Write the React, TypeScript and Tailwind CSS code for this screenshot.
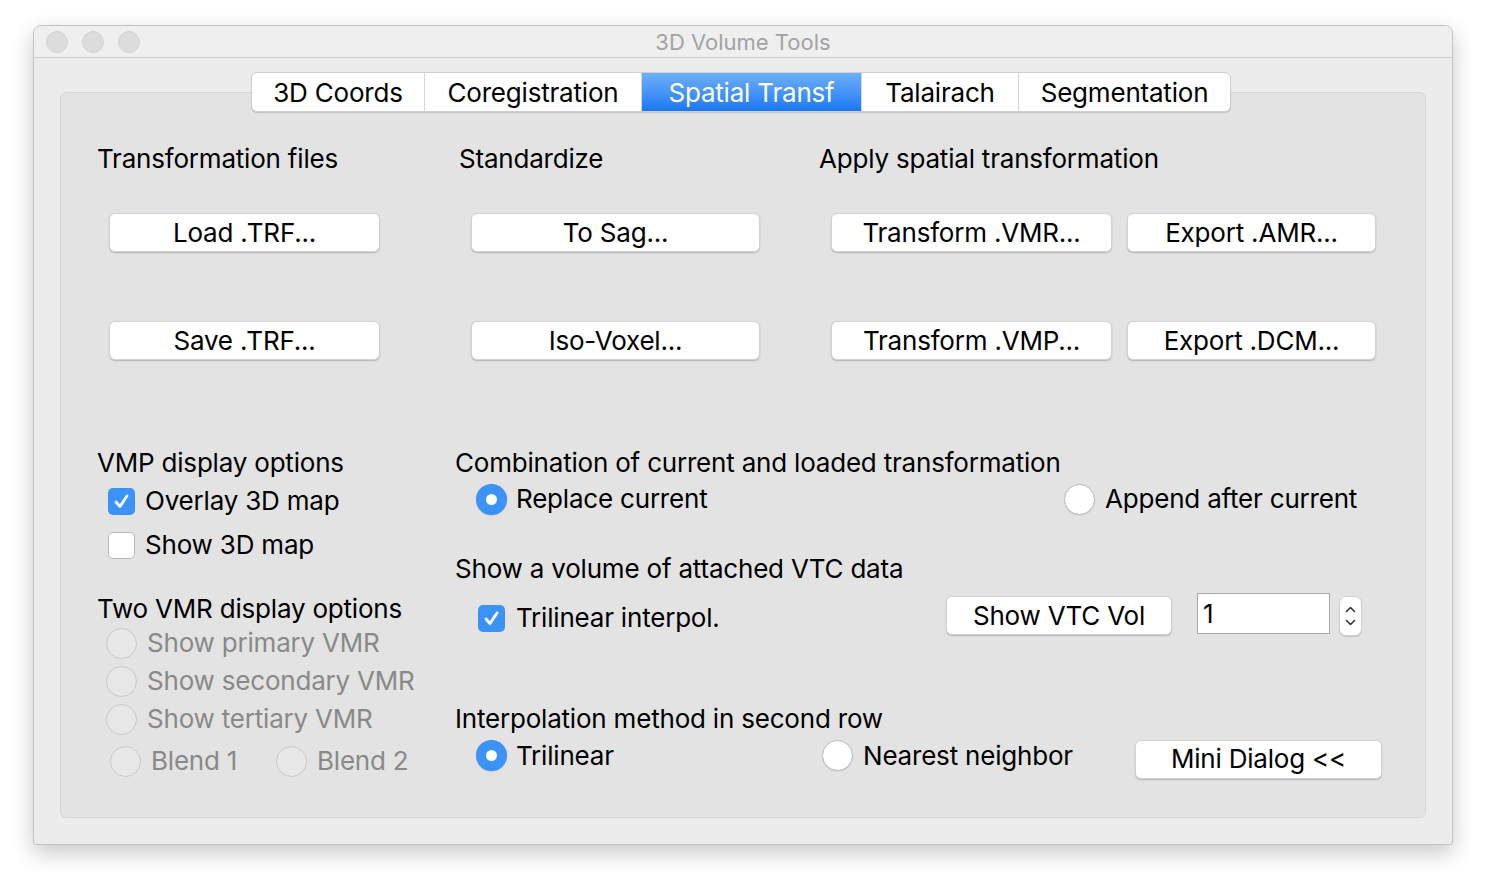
import React from "react";

const font = { fontFamily: "Inter, 'Liberation Sans', Arial, sans-serif" };

function Btn({ cls, children }: { cls: string; children: React.ReactNode }) {
  return (
    <div
      className={`h-[39px] rounded-[6px] bg-white border border-[#d2d2d2] shadow-[0_1px_1.5px_rgba(0,0,0,0.22)] flex items-center justify-center text-black ${cls}`}
    >
      {children}
    </div>
  );
}

function Radio({ state }: { state: "on" | "off" | "dis" }) {
  if (state === "on")
    return (
      <div className="w-[31px] h-[31px] shrink-0 rounded-full bg-[#3b93f7] flex items-center justify-center shadow-[0_0.5px_1px_rgba(0,0,0,0.2)]">
        <div className="w-[11px] h-[11px] rounded-full bg-white" />
      </div>
    );
  if (state === "off")
    return (
      <div className="w-[31px] h-[31px] shrink-0 rounded-full bg-white border border-[#bdbdbd] shadow-[0_0.5px_1px_rgba(0,0,0,0.12)]" />
    );
  return <div className="w-[31px] h-[31px] shrink-0 rounded-full bg-[#e7e7e7] border border-[#c9c9c9]" />;
}

function Check({ on }: { on: boolean }) {
  if (on)
    return (
      <div className="w-[27px] h-[27px] shrink-0 rounded-[5px] bg-[#3b93f7] flex items-center justify-center">
        <svg width="19" height="19" viewBox="0 0 19 19">
          <path d="M4 10 L8 14.5 L15 4" fill="none" stroke="white" strokeWidth="2.8" strokeLinecap="round" strokeLinejoin="round" />
        </svg>
      </div>
    );
  return <div className="w-[27px] h-[27px] shrink-0 rounded-[5px] bg-white border border-[#b9b9b9]" />;
}

export default function App() {
  const tabs = [
    { t: "3D Coords", w: "w-[172px]" },
    { t: "Coregistration", w: "w-[217px]" },
    { t: "Spatial Transf", w: "w-[220px]", sel: true },
    { t: "Talairach", w: "w-[157px]" },
    { t: "Segmentation", w: "w-[212px]" },
  ];
  return (
    <div className="min-h-screen bg-white pl-[33px] pt-[25px] text-[26px] tracking-[-0.2px] text-black" style={font}>
      <div className="w-[1420px] h-[820px] rounded-t-[8px] rounded-b-[3px] border border-[#c3c3c3] bg-[#ececec] shadow-[0_8px_22px_rgba(0,0,0,0.22)] overflow-hidden flex flex-col">
        {/* title bar */}
        <div className="h-[32px] shrink-0 bg-[#efefef] border-b border-[#d0d0d0] grid grid-cols-[1fr_auto_1fr] items-center">
          <div className="flex items-center gap-[14px] pl-[12px]">
            <div className="w-[22px] h-[22px] rounded-full bg-[#dcdcdc] border border-[#d2d2d2]" />
            <div className="w-[22px] h-[22px] rounded-full bg-[#dcdcdc] border border-[#d2d2d2]" />
            <div className="w-[22px] h-[22px] rounded-full bg-[#dcdcdc] border border-[#d2d2d2]" />
          </div>
          <div className="text-[22px] tracking-normal text-[#a3a3a3] leading-none">3D Volume Tools</div>
          <div />
        </div>
        {/* body */}
        <div className="flex-1 px-[26px]">
          <div className="relative z-10 mt-[14px] pr-[4px] flex justify-center">
            <div className="flex h-[40px] rounded-[6px] bg-white border border-[#cfcfcf] shadow-[0_1px_1px_rgba(0,0,0,0.15)] overflow-hidden">
              {tabs.map((tb, i) => (
                <div
                  key={tb.t}
                  className={`${tb.w} flex items-center justify-center ${
                    tb.sel
                      ? "bg-gradient-to-b from-[#6caff9] to-[#1a77f4] text-white"
                      : "text-black"
                  } ${i > 0 ? "border-l border-[#d6d6d6]" : ""}`}
                >
                  {tb.t}
                </div>
              ))}
            </div>
          </div>
          <div className="-mt-[20px] h-[726px] rounded-[6px] border border-[#d6d6d6] bg-[#e3e3e3] pl-[36px] pt-[50px] leading-[32px]">
            {/* top section */}
            <div className="grid grid-cols-[362px_360px_1fr]">
              <div>
                <div className="h-[32px]">Transformation files</div>
                <Btn cls="mt-[38px] ml-[12px] w-[271px]">Load .TRF...</Btn>
                <Btn cls="mt-[69px] ml-[12px] w-[271px]">Save .TRF...</Btn>
              </div>
              <div>
                <div className="h-[32px]">Standardize</div>
                <Btn cls="mt-[38px] ml-[12px] w-[289px]">To Sag...</Btn>
                <Btn cls="mt-[69px] ml-[12px] w-[289px]">Iso-Voxel...</Btn>
              </div>
              <div>
                <div className="h-[32px]">Apply spatial transformation</div>
                <div className="mt-[38px] ml-[12px] flex gap-[15px]">
                  <Btn cls="w-[281px]">Transform .VMR...</Btn>
                  <Btn cls="w-[249px]">Export .AMR...</Btn>
                </div>
                <div className="mt-[69px] ml-[12px] flex gap-[15px]">
                  <Btn cls="w-[281px]">Transform .VMP...</Btn>
                  <Btn cls="w-[249px]">Export .DCM...</Btn>
                </div>
              </div>
            </div>
            {/* bottom section */}
            <div className="mt-[87px] grid grid-cols-[358px_1fr]">
              <div>
                <div className="h-[32px]">VMP display options</div>
                <div className="mt-[6px] h-[32px] ml-[11px] flex items-center gap-[10px]">
                  <Check on />
                  <span>Overlay 3D map</span>
                </div>
                <div className="mt-[12px] h-[32px] ml-[11px] flex items-center gap-[10px]">
                  <Check on={false} />
                  <span>Show 3D map</span>
                </div>
                <div className="mt-[32px] h-[32px]">Two VMR display options</div>
                <div className="mt-[2px] h-[32px] ml-[9px] flex items-center gap-[10px] text-[#898989]">
                  <Radio state="dis" />
                  <span>Show primary VMR</span>
                </div>
                <div className="mt-[6px] h-[32px] ml-[9px] flex items-center gap-[10px] text-[#898989]">
                  <Radio state="dis" />
                  <span>Show secondary VMR</span>
                </div>
                <div className="mt-[6px] h-[32px] ml-[9px] flex items-center gap-[10px] text-[#898989]">
                  <Radio state="dis" />
                  <span>Show tertiary VMR</span>
                </div>
                <div className="mt-[10px] h-[32px] ml-[13px] flex items-center text-[#898989]">
                  <div className="w-[166px] flex items-center gap-[10px]">
                    <Radio state="dis" />
                    <span>Blend 1</span>
                  </div>
                  <div className="flex items-center gap-[10px]">
                    <Radio state="dis" />
                    <span>Blend 2</span>
                  </div>
                </div>
              </div>
              <div>
                <div className="h-[32px]">Combination of current and loaded transformation</div>
                <div className="mt-[4px] h-[32px] ml-[21px] flex items-center">
                  <div className="w-[588px] flex items-center gap-[9px]">
                    <Radio state="on" />
                    <span>Replace current</span>
                  </div>
                  <div className="flex items-center gap-[10px]">
                    <Radio state="off" />
                    <span>Append after current</span>
                  </div>
                </div>
                <div className="mt-[38px] h-[32px]">Show a volume of attached VTC data</div>
                <div className="mt-[8px] h-[43px] ml-[23px] flex items-start">
                  <div className="w-[468px] mt-[9px] flex items-center gap-[11px]">
                    <Check on />
                    <span>Trilinear interpol.</span>
                  </div>
                  <Btn cls="mt-[3px] w-[226px]">Show VTC Vol</Btn>
                  <div className="ml-[25px] w-[133px] h-[41px] bg-white border border-[#a9a9a9] flex items-center pl-[5px] leading-none">
                    1
                  </div>
                  <div className="ml-[9px] mt-[3px] w-[23px] h-[40px] rounded-[7px] bg-white border border-[#cfcfcf] shadow-[0_1px_1px_rgba(0,0,0,0.15)] flex flex-col items-center justify-center gap-[6px]">
                    <svg width="11" height="7" viewBox="0 0 11 7">
                      <path d="M1.5 5.5 L5.5 1.5 L9.5 5.5" fill="none" stroke="#333" strokeWidth="1.6" strokeLinecap="round" strokeLinejoin="round" />
                    </svg>
                    <svg width="11" height="7" viewBox="0 0 11 7">
                      <path d="M1.5 1.5 L5.5 5.5 L9.5 1.5" fill="none" stroke="#333" strokeWidth="1.6" strokeLinecap="round" strokeLinejoin="round" />
                    </svg>
                  </div>
                </div>
                <div className="mt-[67px] h-[32px]">Interpolation method in second row</div>
                <div className="mt-[4px] h-[40px] ml-[21px] flex items-center">
                  <div className="w-[346px] -mt-[7px] flex items-center gap-[9px]">
                    <Radio state="on" />
                    <span>Trilinear</span>
                  </div>
                  <div className="w-[313px] -mt-[7px] flex items-center gap-[10px]">
                    <Radio state="off" />
                    <span>Nearest neighbor</span>
                  </div>
                  <Btn cls="w-[247px]">Mini Dialog &lt;&lt;</Btn>
                </div>
              </div>
            </div>
          </div>
        </div>
      </div>
    </div>
  );
}
